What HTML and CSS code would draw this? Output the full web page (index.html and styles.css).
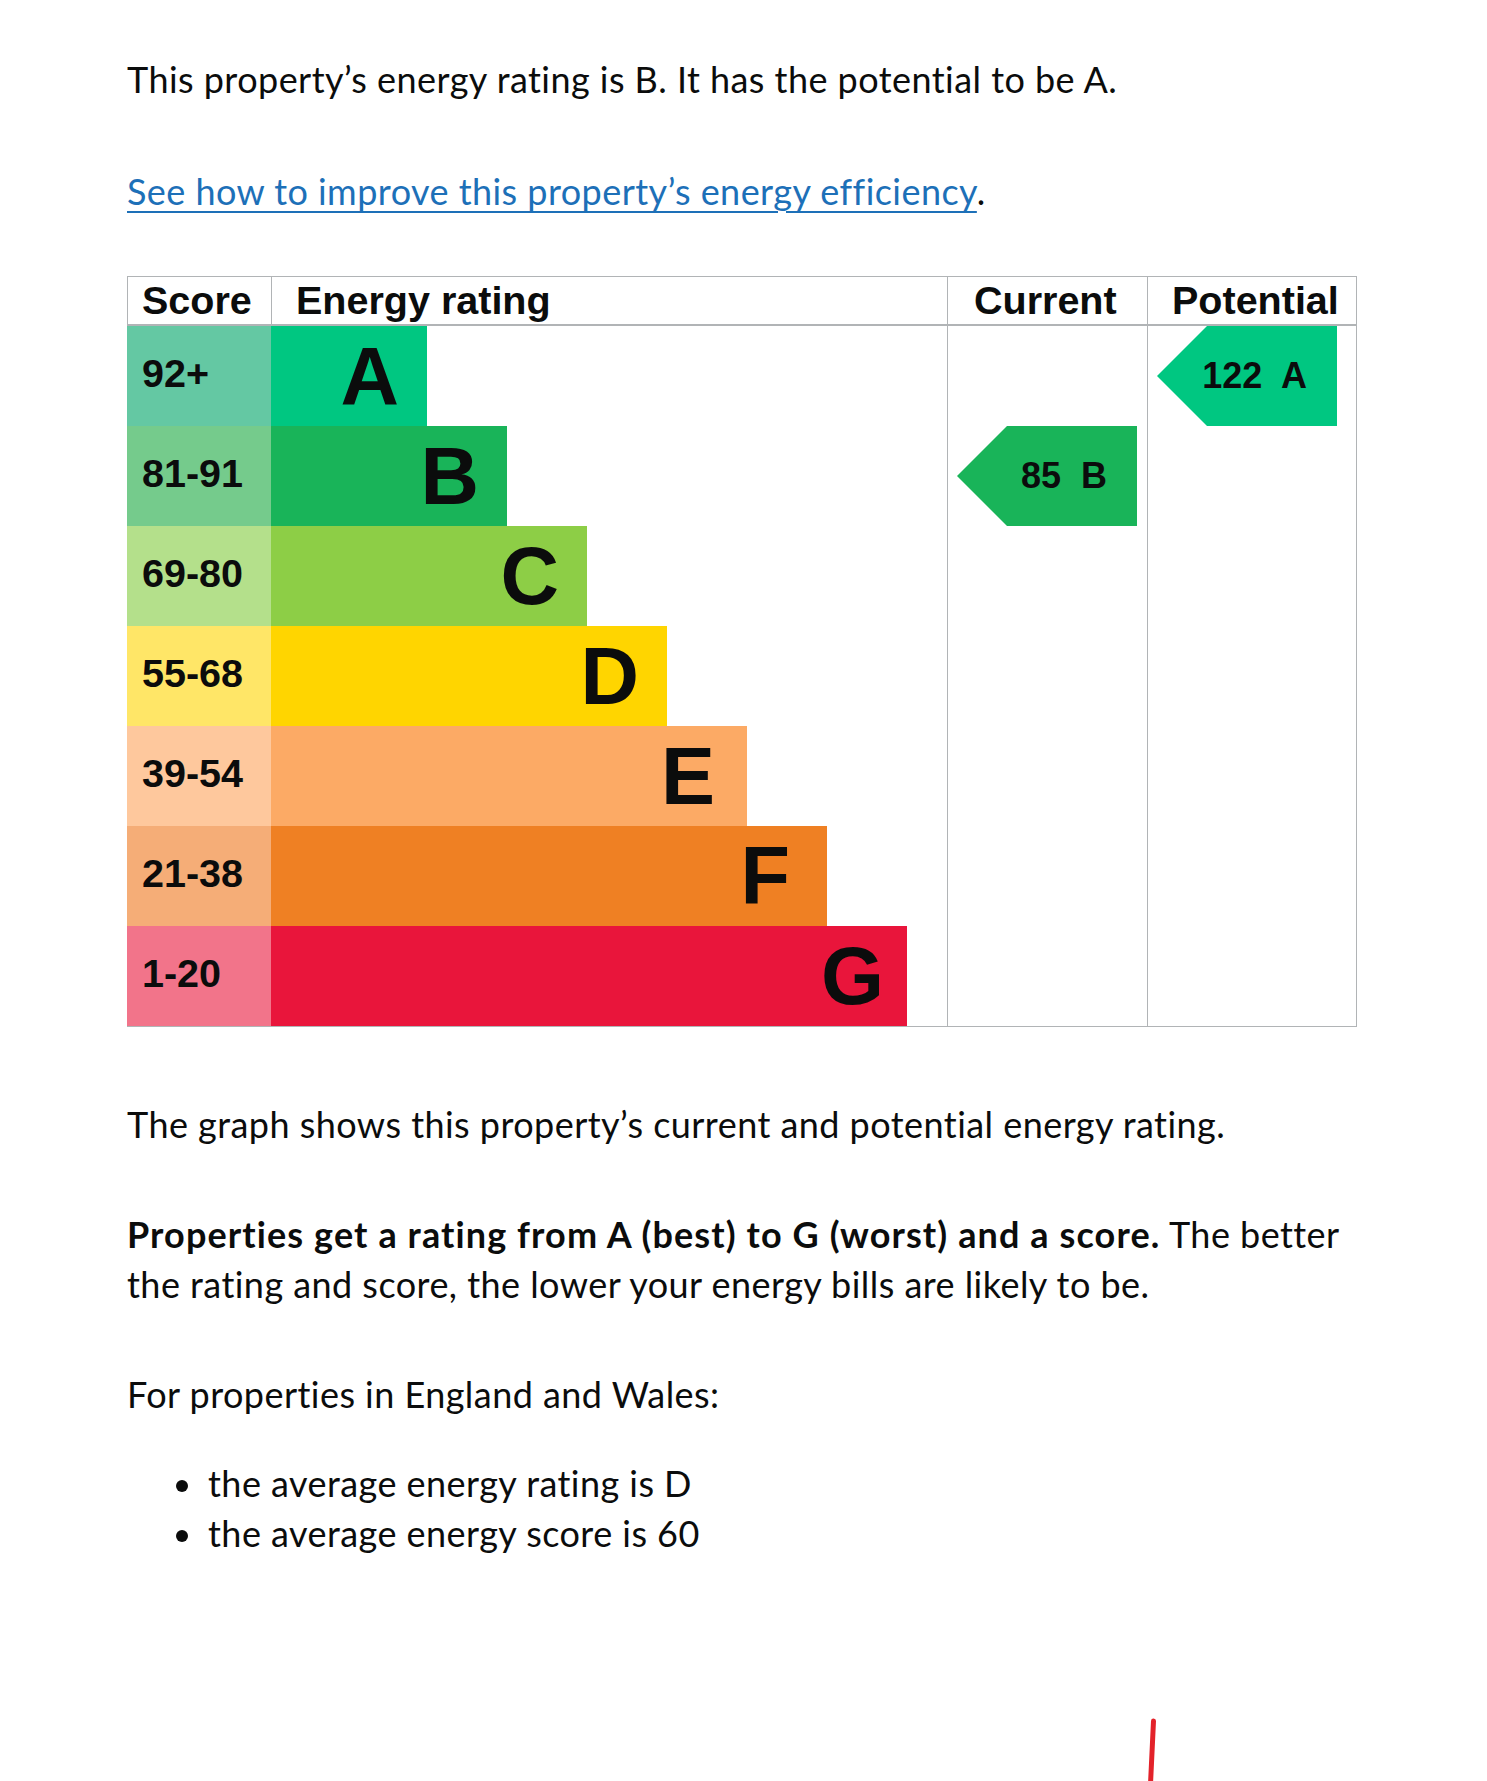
FILE: index.html
```html
<!DOCTYPE html>
<html lang="en">
<head>
<meta charset="utf-8">
<title>Energy rating</title>
<link rel="stylesheet" href="styles.css">
</head>
<body>
<main class="page">
  <p class="body intro">This property’s energy rating is B. It has the potential to be A.</p>
  <p class="body link-line"><a href="#" class="link">See how to improve this property’s energy efficiency</a>.</p>

  <div class="epc">
    <div class="th th-score">Score</div>
    <div class="th th-rating">Energy rating</div>
    <div class="th th-current">Current</div>
    <div class="th th-potential">Potential</div>

    <div class="score score-a">92+</div>
    <div class="rating"><div class="bar bar-a" style="width:156px">A</div></div>
    <div class="score score-b">81-91</div>
    <div class="rating"><div class="bar bar-b" style="width:236px">B</div></div>
    <div class="score score-c">69-80</div>
    <div class="rating"><div class="bar bar-c" style="width:316px">C</div></div>
    <div class="score score-d">55-68</div>
    <div class="rating"><div class="bar bar-d" style="width:396px">D</div></div>
    <div class="score score-e">39-54</div>
    <div class="rating"><div class="bar bar-e" style="width:476px">E</div></div>
    <div class="score score-f">21-38</div>
    <div class="rating"><div class="bar bar-f" style="width:556px">F</div></div>
    <div class="score score-g">1-20</div>
    <div class="rating"><div class="bar bar-g" style="width:636px">G</div></div>

    <div class="col col-current">
      <div class="arrow arrow-b row-2">85  B</div>
    </div>
    <div class="col col-potential">
      <div class="arrow arrow-a row-1">122  A</div>
    </div>
  </div>

  <p class="body graph-note">The graph shows this property’s current and potential energy rating.</p>
  <p class="body"><strong class="strong">Properties get a rating from A (best) to G (worst) and a score.</strong> The better the rating and score, the lower your energy bills are likely to be.</p>
  <p class="body lead-in">For properties in England and Wales:</p>
  <ul class="list">
    <li class="list-item">the average energy rating is D</li>
    <li class="list-item">the average energy score is 60</li>
  </ul>

  <div class="mark">
    <svg class="mark-svg" width="12" height="66" viewBox="0 0 12 66" aria-hidden="true">
      <path d="M7.5 3 L4.5 66" stroke="#e3222a" stroke-width="5" stroke-linecap="round" fill="none"/>
    </svg>
  </div>
</main>
</body>
</html>
```

FILE: styles.css
```css
html, body {
  margin: 0;
  padding: 0;
  background: #ffffff;
}

body {
  color: #0b0c0c;
  font-family: Lato, "Noto Sans", sans-serif;
}

.page {
  padding: 54px 0 0 127px;
}

.body {
  max-width: 1230px;
  font-size: 36px;
  line-height: 50px;
  letter-spacing: 0.45px;
  margin: 0 0 60px;
}

.intro {
  margin-bottom: 62px;
}

.link {
  color: #1d70b8;
  text-decoration: underline;
  text-decoration-thickness: 2px;
  text-underline-offset: 6px;
}

.strong {
  font-weight: 700;
  letter-spacing: 1.1px;
}

/* Energy rating graph */
.epc {
  display: grid;
  grid-template-columns: 144px 676px 200px 210px;
  grid-template-rows: 50px repeat(7, 100px);
  width: 1230px;
  border-bottom: 1px solid #b1b4b6;
  font-family: "Liberation Sans", Arial, sans-serif;
  font-weight: 700;
  color: #0b0c0c;
  margin-bottom: 72px;
}

.th {
  box-sizing: border-box;
  border-top: 1px solid #b1b4b6;
  border-bottom: 2px solid #b1b4b6;
  border-left: 1px solid #b1b4b6;
  font-size: 39.5px;
  line-height: 47px;
  white-space: nowrap;
}

.th-score { grid-column: 1; padding-left: 14px; }
.th-rating { grid-column: 2; padding-left: 24px; }
.th-current { grid-column: 3; padding-left: 26px; }
.th-potential { grid-column: 4; padding-left: 24px; border-right: 1px solid #b1b4b6; }

.score {
  grid-column: 1;
  font-size: 39.5px;
  line-height: 95px;
  padding-left: 15px;
}

.rating {
  grid-column: 2;
}

.bar {
  box-sizing: border-box;
  height: 100px;
  text-align: right;
  padding-right: 28px;
  font-size: 81px;
  line-height: 100px;
}

.score-a { background: #64c8a3; }
.score-b { background: #75cb8c; }
.score-c { background: #b4e08b; }
.score-d { background: #ffe667; }
.score-e { background: #fec89d; }
.score-f { background: #f5ad77; }
.score-g { background: #f2748a; }

.bar-a { background: #00c781; }
.bar-b { background: #19b459; }
.bar-c { background: #8dce46; }
.bar-d { background: #ffd500; }
.bar-e { background: #fcaa65; padding-right: 32px; }
.bar-f { background: #ef8023; padding-right: 37px; }
.bar-g { background: #e9153b; padding-right: 23px; }

.col {
  grid-row: 2 / span 7;
  display: grid;
  grid-template-rows: repeat(7, 100px);
  box-sizing: border-box;
  border-left: 1px solid #b1b4b6;
}

.col-current { grid-column: 3; }
.col-potential { grid-column: 4; border-right: 1px solid #b1b4b6; }

.arrow {
  box-sizing: border-box;
  width: 180px;
  height: 100px;
  margin-left: 9px;
  clip-path: polygon(0 50%, 50px 0, 100% 0, 100% 100%, 50px 100%);
  text-align: right;
  padding-right: 30px;
  font-size: 36px;
  line-height: 100px;
  white-space: pre;
}

.arrow-a { background: #00c781; }
.arrow-b { background: #19b459; }

.row-1 { grid-row: 1; }
.row-2 { grid-row: 2; }

.graph-note {
  margin-top: 0;
}

.lead-in {
  margin-bottom: 39px;
}

.list {
  list-style: none;
  margin: 0;
  padding: 0;
  font-size: 36px;
  line-height: 50px;
  letter-spacing: 0.45px;
}

.list-item::before {
  content: "";
  display: inline-block;
  width: 12px;
  height: 12px;
  border-radius: 50%;
  background: #0b0c0c;
  margin: 0 20px 5px 49px;
}

.mark {
  margin-top: 160px;
  padding-left: 1019px;
  line-height: 0;
}

.mark-svg {
  display: block;
}
```
